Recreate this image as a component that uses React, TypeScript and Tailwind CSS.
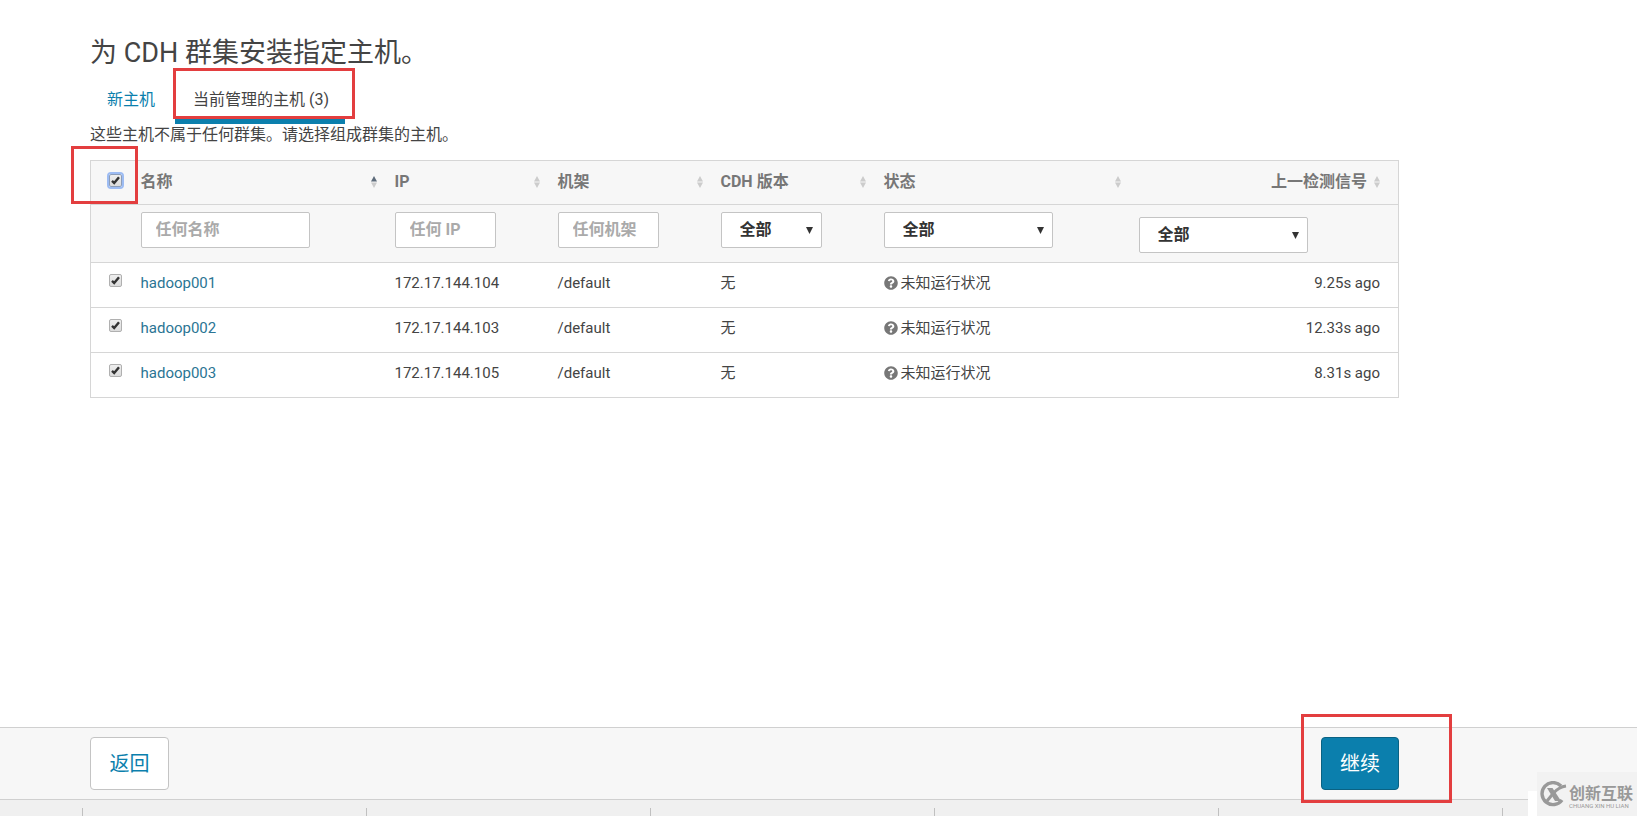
import { useState } from "react";
import { FaQuestionCircle } from "react-icons/fa";

const hosts = [
  { name: "hadoop001", ip: "172.17.144.104", rack: "/default", version: "无", status: "未知运行状况", heartbeat: "9.25s ago" },
  { name: "hadoop002", ip: "172.17.144.103", rack: "/default", version: "无", status: "未知运行状况", heartbeat: "12.33s ago" },
  { name: "hadoop003", ip: "172.17.144.105", rack: "/default", version: "无", status: "未知运行状况", heartbeat: "8.31s ago" },
];

const SortIcon = ({ active = false }: { active?: boolean }) => (
  <svg width="6" height="12" viewBox="0 0 6 12" className="shrink-0">
    <path d="M3 0L6 5.5H0z" fill={active ? "#5d6b7a" : "#cccccc"} />
    <path d="M0 6.5h6L3 12z" fill="#cccccc" />
  </svg>
);

const Checkbox = ({
  label,
  checked,
  focused = false,
  onChange,
}: {
  label: string;
  checked: boolean;
  focused?: boolean;
  onChange: () => void;
}) => (
  <span className="grid size-[13px] place-items-center">
    <input
      type="checkbox"
      aria-label={label}
      checked={checked}
      onChange={onChange}
      className={`col-start-1 row-start-1 size-[13px] appearance-none rounded-xs border bg-linear-to-b from-[#eeeeee] to-[#dcdcdc] ${
        focused ? "border-[#8c9db8] outline-2 outline-[#9dbcf3]" : "border-[#b0b0b0]"
      }`}
    />
    {checked && (
      <svg width="9" height="9" viewBox="0 0 9 9" className="pointer-events-none col-start-1 row-start-1">
        <path d="M1 4.8L3.2 7L8 1.2" fill="none" stroke="#333333" strokeWidth="2.4" />
      </svg>
    )}
  </span>
);

const HeaderLabel = ({ children, active }: { children: string; active?: boolean }) => (
  <div className="flex items-center justify-between">
    <span>{children}</span>
    <SortIcon active={active} />
  </div>
);

const TextFilter = ({ placeholder, width }: { placeholder: string; width: string }) => (
  <input
    type="text"
    aria-label={placeholder}
    placeholder={placeholder}
    className={`block h-9 rounded-xs border border-[#c4c4c4] bg-white px-3.5 pb-0.5 font-bold placeholder:text-[#aaaaaa] ${width}`}
  />
);

const SelectFilter = ({ label, width }: { label: string; width: string }) => (
  <span className={`grid h-9 items-center ${width}`}>
    <select
      aria-label={label}
      className="col-start-1 row-start-1 h-9 w-full appearance-none rounded-xs border border-[#c4c4c4] bg-white pl-[18px] font-bold text-[#333333]"
    >
      <option>全部</option>
    </select>
    <svg
      width="7"
      height="7"
      viewBox="0 0 7 7"
      className="pointer-events-none col-start-1 row-start-1 mr-[9px] justify-self-end"
    >
      <path d="M0 0h7L3.5 7z" fill="#333333" />
    </svg>
  </span>
);

export default function App() {
  const [selected, setSelected] = useState<string[]>(hosts.map((h) => h.name));

  const allSelected = selected.length === hosts.length;

  const toggleAll = () => setSelected(allSelected ? [] : hosts.map((h) => h.name));

  const toggle = (name: string) =>
    setSelected(selected.includes(name) ? selected.filter((n) => n !== name) : [...selected, name]);

  return (
    <div className="flex min-h-screen flex-col overflow-hidden bg-white font-[Roboto,'Noto_Sans_CJK_SC',sans-serif] text-base text-[#444444]">
      <main className="flex-1 pr-[238px] pl-[90px]">
        <h1 className="pt-[34px] text-[27px] leading-[38px]">为 CDH 群集安装指定主机。</h1>

        {/* Tabs */}
        <nav className="flex h-[52px] gap-px leading-6">
          <a href="#new" className="pt-4 pr-[18px] pl-[17px] text-[#0b7fad]">
            新主机
          </a>
          <div className="relative ml-px border-b-[5px] border-[#0b7fad]">
            <a href="#managed" className="block pt-4 pr-4 pl-[18px]">
              当前管理的主机 (3)
            </a>
            <span className="pointer-events-none absolute -top-1 -left-0.5 h-[51px] w-[182px] border-3 border-[#e33e3f]" />
          </div>
        </nav>
        <p className="h-9 pt-px leading-5">这些主机不属于任何群集。请选择组成群集的主机。</p>

        {/* Hosts */}
        <table className="w-full table-fixed border-collapse border border-[#d6d6d6] text-left">
          <colgroup>
            <col className="w-[41px]" />
            <col className="w-[254px]" />
            <col className="w-[163px]" />
            <col className="w-[163px]" />
            <col className="w-[163px]" />
            <col className="w-[255px]" />
            <col />
          </colgroup>
          <thead className="bg-[#f7f7f7] text-[#777777]">
            <tr className="h-11 border-b border-[#d6d6d6]">
              <th className="pb-1 pl-[18px]">
                <div className="relative">
                  <Checkbox label="全选" checked={allSelected} focused onChange={toggleAll} />
                  <span className="pointer-events-none absolute -top-7 -left-[38px] h-[58px] w-[67px] border-3 border-[#e33e3f]" />
                </div>
              </th>
              <th className="px-[9px] pb-0.5">
                <HeaderLabel active>名称</HeaderLabel>
              </th>
              <th className="px-[9px] pb-0.5">
                <HeaderLabel>IP</HeaderLabel>
              </th>
              <th className="px-[9px] pb-0.5">
                <HeaderLabel>机架</HeaderLabel>
              </th>
              <th className="px-[9px] pb-0.5">
                <HeaderLabel>CDH 版本</HeaderLabel>
              </th>
              <th className="px-[9px] pb-0.5">
                <HeaderLabel>状态</HeaderLabel>
              </th>
              <th className="pr-[18px] pb-0.5">
                <div className="flex items-center justify-end gap-[7px]">
                  上一检测信号
                  <SortIcon />
                </div>
              </th>
            </tr>
            <tr className="h-[58px] border-b border-[#d6d6d6] align-top">
              <th />
              <th className="px-[9px] pt-[7px]">
                <TextFilter placeholder="任何名称" width="w-[169px]" />
              </th>
              <th className="px-[9px] pt-[7px]">
                <TextFilter placeholder="任何 IP" width="w-[101px]" />
              </th>
              <th className="px-[9px] pt-[7px]">
                <TextFilter placeholder="任何机架" width="w-[101px]" />
              </th>
              <th className="px-[9px] pt-[7px]">
                <SelectFilter label="CDH 版本" width="w-[101px]" />
              </th>
              <th className="px-[9px] pt-[7px]">
                <SelectFilter label="状态" width="w-[169px]" />
              </th>
              <th className="px-[9px] pt-3">
                <SelectFilter label="上一检测信号" width="w-[169px]" />
              </th>
            </tr>
          </thead>
          <tbody className="text-[15px] leading-5">
            {hosts.map((host) => (
              <tr key={host.name} className="h-[45px] border-b border-[#d6d6d6] align-top">
                <td className="pt-[11px] pl-[18px]">
                  <Checkbox
                    label={host.name}
                    checked={selected.includes(host.name)}
                    onChange={() => toggle(host.name)}
                  />
                </td>
                <td className="px-[9px] pt-2.5">
                  <a href={`#${host.name}`} className="text-[#2b7594]">
                    {host.name}
                  </a>
                </td>
                <td className="px-[9px] pt-2.5">{host.ip}</td>
                <td className="px-[9px] pt-2.5">{host.rack}</td>
                <td className="px-[9px] pt-2.5">{host.version}</td>
                <td className="px-[9px] pt-2.5">
                  <div className="flex items-center gap-[3px]">
                    <FaQuestionCircle size={14} color="#777777" />
                    {host.status}
                  </div>
                </td>
                <td className="pt-2.5 pr-[18px] text-right">{host.heartbeat}</td>
              </tr>
            ))}
          </tbody>
        </table>
      </main>

      {/* Wizard buttons */}
      <footer className="relative">
        <div className="flex justify-between border-y border-[#d0d0d0] bg-[#f7f7f7] pt-[9px] pr-[238px] pb-[9px] pl-[90px] text-xl">
          <button className="h-[53px] w-[79px] rounded border border-[#c4c4c4] bg-white text-[#0b7fad]">返回</button>
          <div className="relative">
            <button className="h-[53px] w-[78px] rounded border border-[#0a6283] bg-[#0b7fad] text-white">继续</button>
            <span className="pointer-events-none absolute -top-[23px] -left-5 h-[89px] w-[151px] border-3 border-[#e33e3f]" />
          </div>
        </div>
        <div className="flex h-4 bg-[#f0f0f0] pt-2 pl-[82px]">
          {[0, 1, 2, 3, 4, 5].map((i) => (
            <span key={i} className="w-[284px] shrink-0 border-l border-[#c0c0c0]" />
          ))}
        </div>

        {/* Watermark */}
        <div className="absolute right-0 bottom-0 flex items-end">
          <span className="h-[25px] w-[9px] bg-white" />
          <div className="flex h-11 w-[100px] items-center gap-0.5 bg-[#f2f2f2] pl-0.5 text-[#999999]">
            <svg width="28" height="26" viewBox="0 0 28 26" fill="none" stroke="#999999" className="shrink-0">
              <path d="M22 5A11 11 0 1 0 23 19" strokeWidth="3.4" />
              <path d="M8 7h5.5l8.5 13h-6z" fill="#999999" stroke="none" />
              <path d="M27 5Q20 6 14.5 12L8 20" strokeWidth="3" />
            </svg>
            <div className="flex flex-col pt-1">
              <span className="text-base leading-5 font-bold">创新互联</span>
              <span className="text-[6px] leading-1 whitespace-nowrap">CHUANG XIN HU LIAN</span>
            </div>
          </div>
        </div>
      </footer>
    </div>
  );
}
